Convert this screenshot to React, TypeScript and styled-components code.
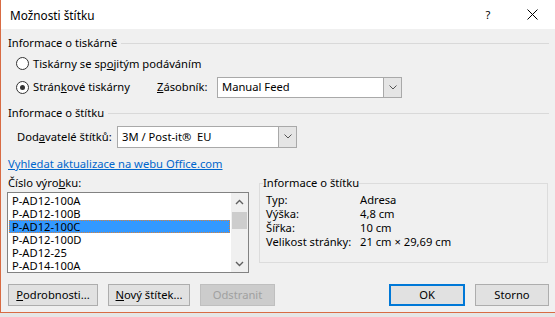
import React from 'react';
import styled, { createGlobalStyle } from 'styled-components';

const GlobalStyle = createGlobalStyle`
  html, body {
    margin: 0;
    padding: 0;
    background: #e6e6e6;
  }
  body {
    font-family: "Noto Sans", "Segoe UI", sans-serif;
    font-size: 11.2px;
    line-height: 14px;
    color: #000;
    white-space: nowrap;
  }
`;

const Dialog = styled.div`
  width: 555px;
  height: 313px;
  box-sizing: border-box;
  background: #f0f0f0;
  border-left: 1px solid #d86b43;
  border-bottom: 1px solid #d86b43;
  display: flex;
  flex-direction: column;
`;

const TitleBar = styled.div`
  height: 29px;
  flex: none;
  background: #fff;
  display: flex;
  align-items: center;
  padding-left: 9px;
`;

const Title = styled.div`
  flex: 1;
  font-size: 11.8px;
`;

const HelpButton = styled.div`
  width: 16px;
  text-align: center;
  margin-right: 31px;
`;

const CloseButton = styled.div`
  display: flex;
  margin-right: 17px;
`;

const Body = styled.div`
  flex: 1;
  display: flex;
  flex-direction: column;
  padding: 0 6px 0 7px;
`;

const SectionHeader = styled.div<{ $top: number }>`
  display: flex;
  align-items: center;
  gap: 4px;
  height: 16px;
  margin-top: ${p => p.$top}px;
  &::after {
    content: '';
    flex: 1;
    height: 1px;
    background: #d9d9d9;
  }
`;

const Row = styled.div<{ $h: number; $top?: number }>`
  display: flex;
  align-items: center;
  height: ${p => p.$h}px;
  margin-top: ${p => p.$top ?? 0}px;
  padding-left: 8px;
`;

const RadioLabel = styled.label<{ $w?: number }>`
  display: flex;
  align-items: center;
  gap: 4px;
  width: ${p => (p.$w ? `${p.$w}px` : 'auto')};
  flex: none;
`;

const RadioCircle = styled.span<{ $checked?: boolean }>`
  width: 13px;
  height: 13px;
  box-sizing: border-box;
  border-radius: 50%;
  border: 1px solid #333;
  background: #fff;
  display: flex;
  align-items: center;
  justify-content: center;
  &::after {
    content: '';
    width: 5px;
    height: 5px;
    border-radius: 50%;
    background: ${p => (p.$checked ? '#333' : 'transparent')};
  }
`;

const FieldLabel = styled.span<{ $w: number; $pad?: number }>`
  width: ${p => p.$w}px;
  padding-left: ${p => p.$pad ?? 0}px;
  box-sizing: border-box;
  flex: none;
`;

const Select = styled.div<{ $w: number; $h: number }>`
  width: ${p => p.$w}px;
  height: ${p => p.$h}px;
  box-sizing: border-box;
  border: 1px solid #a9a9a9;
  background: #fff;
  display: flex;
  align-items: stretch;
`;

const SelectValue = styled.div`
  flex: 1;
  display: flex;
  align-items: center;
  padding-left: 4px;
  white-space: pre;
`;

const SelectArrow = styled.div`
  width: 17px;
  background: #e5e5e5;
  border-left: 1px solid #a9a9a9;
  display: flex;
  align-items: center;
  justify-content: center;
`;

const Link = styled.a`
  display: block;
  height: 16px;
  line-height: 16px;
  margin-top: 8px;
  color: #0066cc;
  text-decoration: underline;
  align-self: flex-start;
`;

const Lower = styled.div`
  display: flex;
  margin-top: 3px;
`;

const LeftCol = styled.div`
  width: 241px;
  display: flex;
  flex-direction: column;
`;

const ColLabel = styled.div`
  height: 16px;
  line-height: 16px;
`;

const ListBox = styled.div`
  margin: 1px 0 0 -1px;
  height: 81px;
  width: 242px;
  box-sizing: border-box;
  border: 1px solid #828282;
  background: #fff;
  display: flex;
`;

const Items = styled.div`
  flex: 1;
  padding: 1px 1px 0 1px;
  overflow: hidden;
`;

const Item = styled.div<{ $selected?: boolean }>`
  height: 13px;
  line-height: 13px;
  padding-left: 3px;
  background: ${p => (p.$selected ? '#3399ff' : 'transparent')};
  outline: ${p => (p.$selected ? '1px dotted #d9823a' : 'none')};
  outline-offset: -1px;
`;

const ScrollBar = styled.div`
  width: 17px;
  background: #f0f0f0;
  display: flex;
  flex-direction: column;
`;

const ScrollButton = styled.div`
  height: 17px;
  display: flex;
  align-items: center;
  justify-content: center;
`;

const ScrollTrack = styled.div`
  flex: 1;
  padding: 2px 1px 0;
`;

const Thumb = styled.div`
  height: 17px;
  background: #cdcdcd;
`;

const InfoBox = styled.fieldset`
  margin: 0 0 0 10px;
  width: 289px;
  height: 88px;
  box-sizing: border-box;
  border: 1px solid #dcdcdc;
  padding: 0 0 0 3px;
`;

const Legend = styled.legend`
  padding: 0;
  line-height: 16px;
`;

const InfoGrid = styled.div`
  display: grid;
  grid-template-columns: 94px auto;
  grid-auto-rows: 14px;
  align-items: center;
  padding: 2px 0 0 3px;
`;

const Buttons = styled.div`
  display: flex;
  margin-top: 11px;
  gap: 10px;
`;

const Button = styled.button<{ $w: number; $default?: boolean }>`
  width: ${p => p.$w}px;
  height: 22px;
  box-sizing: border-box;
  padding: 0;
  font: inherit;
  color: #000;
  background: #e1e1e1;
  border: ${p => (p.$default ? '2px solid #0078d7' : '1px solid #adadad')};
  &:disabled {
    background: #cccccc;
    border-color: #bfbfbf;
    color: #a0a0a0;
  }
`;

const Spacer = styled.div`
  flex: 1;
`;

const Chevron = ({ up }: { up?: boolean }) => (
  <svg width="9" height="6" viewBox="0 0 9 6">
    <polyline
      points={up ? '1,5 4.5,1.5 8,5' : '1,1 4.5,4.5 8,1'}
      fill="none"
      stroke="#606060"
      strokeWidth="1.4"
    />
  </svg>
);

const SmallChevron = () => (
  <svg width="8" height="5" viewBox="0 0 8 5">
    <polyline points="0.5,0.5 4,4 7.5,0.5" fill="none" stroke="#555" strokeWidth="1" />
  </svg>
);

const items = ['P-AD12-100A', 'P-AD12-100B', 'P-AD12-100C', 'P-AD12-100D', 'P-AD12-25', 'P-AD14-100A'];

const info: [string, string][] = [
  ['Typ:', 'Adresa'],
  ['Výška:', '4,8 cm'],
  ['Šířka:', '10 cm'],
  ['Velikost stránky:', '21 cm × 29,69 cm'],
];

export default function App() {
  return (
    <>
      <GlobalStyle />
      <Dialog>
        <TitleBar>
          <Title>Možnosti štítku</Title>
          <HelpButton>?</HelpButton>
          <CloseButton>
            <svg width="11" height="11" viewBox="0 0 11 11">
              <path d="M0.5,0.5 L10.5,10.5 M10.5,0.5 L0.5,10.5" stroke="#000" strokeWidth="1" />
            </svg>
          </CloseButton>
        </TitleBar>
        <Body>
          <SectionHeader $top={6}>Informace o tiskárně</SectionHeader>
          <Row $h={23} $top={1}>
            <RadioLabel>
              <RadioCircle />
              <span>Tiskárny se sp<u>o</u>jitým podáváním</span>
            </RadioLabel>
          </Row>
          <Row $h={24}>
            <RadioLabel $w={141}>
              <RadioCircle $checked />
              <span>Strán<u>k</u>ové tiskárny</span>
            </RadioLabel>
            <FieldLabel $w={60}><u>Z</u>ásobník:</FieldLabel>
            <Select $w={185} $h={21}>
              <SelectValue>Manual Feed</SelectValue>
              <SelectArrow><SmallChevron /></SelectArrow>
            </Select>
          </Row>
          <SectionHeader $top={6}>Informace o štítku</SectionHeader>
          <Row $h={23} $top={4}>
            <FieldLabel $w={101} $pad={1}>Dod<u>a</u>vatelé štítků:</FieldLabel>
            <Select $w={180} $h={22}>
              <SelectValue>{'3M / Post-it®  EU'}</SelectValue>
              <SelectArrow><SmallChevron /></SelectArrow>
            </Select>
          </Row>
          <Link>Vyhledat aktualizace na webu Office.com</Link>
          <Lower>
            <LeftCol>
              <ColLabel>Číslo výro<u>b</u>ku:</ColLabel>
              <ListBox>
                <Items>
                  {items.map((it, i) => (
                    <Item key={it} $selected={i === 2}>{it}</Item>
                  ))}
                </Items>
                <ScrollBar>
                  <ScrollButton><Chevron up /></ScrollButton>
                  <ScrollTrack><Thumb /></ScrollTrack>
                  <ScrollButton><Chevron /></ScrollButton>
                </ScrollBar>
              </ListBox>
            </LeftCol>
            <InfoBox>
              <Legend>Informace o štítku</Legend>
              <InfoGrid>
                {info.map(([k, v]) => (
                  <React.Fragment key={k}>
                    <span>{k}</span>
                    <span>{v}</span>
                  </React.Fragment>
                ))}
              </InfoGrid>
            </InfoBox>
          </Lower>
          <Buttons>
            <Button $w={90}><u>P</u>odrobnosti...</Button>
            <Button $w={82}><u>N</u>ový štítek...</Button>
            <Button $w={75} disabled>Odstranit</Button>
            <Spacer />
            <Button $w={76} $default>OK</Button>
            <Button $w={74}>Storno</Button>
          </Buttons>
        </Body>
      </Dialog>
    </>
  );
}
